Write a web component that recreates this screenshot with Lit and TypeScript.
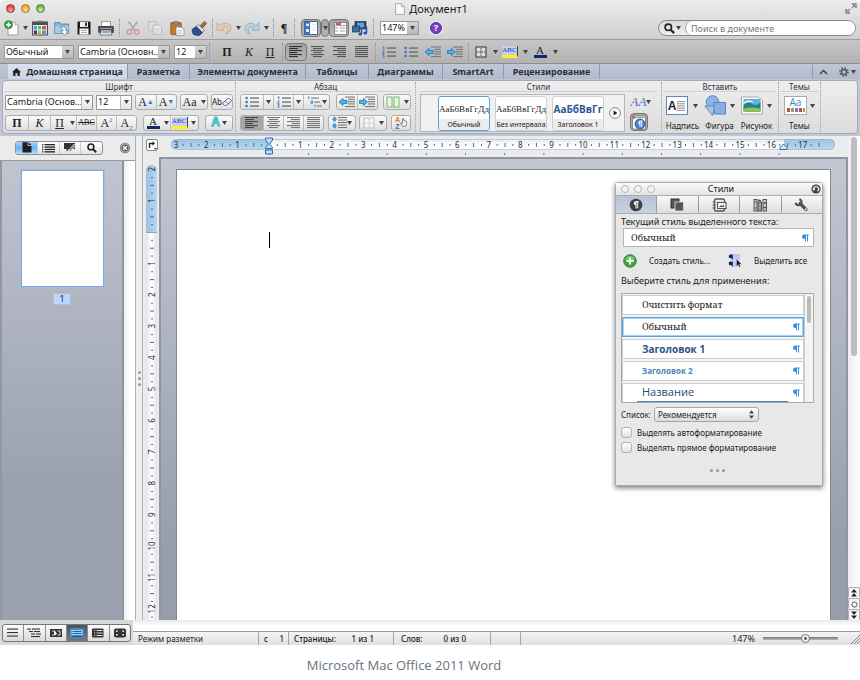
import { LitElement, html, css, svg, nothing } from "lit";
import { customElement } from "lit/decorators.js";
import { classMap } from "lit/directives/class-map.js";

const pic = (w: number, h: number, body: unknown) =>
  html`<svg width=${w} height=${h} viewBox="0 0 ${w} ${h}" aria-hidden="true">${body}</svg>`;

const caret = html`<svg class="caret" width="5" height="4" viewBox="0 0 5 4" aria-hidden="true"><path d="M0 0h5L2.5 4z" fill="#444" /></svg>`;

const lines = (rows: number[][], c = "#555") => svg`${rows.map(([x, y, w]) => svg`<rect x=${x} y=${y} width=${w} height="1.1" fill=${c} />`)}`;

const alignIcon = (kind: string, c = "#555") => {
  const ws = [13, 9, 13, 8, 13, 9];
  return pic(14, 13, lines(ws.map((w, i) => {
    const width = kind === "justify" ? 13 : w;
    const x = kind === "center" ? (13 - width) / 2 : kind === "right" ? 13 - width : 0;
    return [x, 1 + i * 2, width];
  }), c));
};

const bulletIcon = pic(14, 12, svg`
  <circle cx="1.6" cy="2" r="1.3" fill="#3f6fd0"/><circle cx="1.6" cy="6" r="1.3" fill="#3f6fd0"/><circle cx="1.6" cy="10" r="1.3" fill="#3f6fd0"/>
  ${lines([[5, 1.5, 9], [5, 5.5, 9], [5, 9.5, 9]])}`);
const numberIcon = pic(14, 12, svg`
  <path d="M.8 1.2l1-.7v3M.6 5h1.6l-1.6 2.4h1.8M.6 8.7h1.6l-.9 1.2q1.3.3.8 1.2-.5.7-1.6.3" fill="none" stroke="#3f6fd0" stroke-width=".9"/>
  ${lines([[5, 1.5, 9], [5, 5.5, 9], [5, 9.5, 9]])}`);
const multiIcon = pic(15, 12, svg`
  <path d="M.8 1.2l1-.7v3M4 5h1.5v2.4H4zM8 8.6v2.6" fill="none" stroke="#3f8fd0" stroke-width="1"/>
  ${lines([[4, 1.5, 8], [7, 5.5, 6], [10, 9.5, 5]], "#777")}`);
const indentIcon = (dir: number) => pic(16, 12, svg`
  ${lines([[6, .5, 10], [9, 2.8, 7], [9, 5.1, 7], [9, 7.4, 7], [6, 10, 10]], "#777")}
  <path d=${dir < 0 ? "M0 6l4-3.6v2h4v3H4v2z" : "M8.5 6l-4-3.6v2h-4v3h4v2z"} fill="#4fb4ee" stroke="#1e6fae" stroke-width=".8"/>`);
const borderIcon = (c: string) => pic(12, 12, svg`
  <rect x="1" y="1" width="10" height="10" fill="#fff8" stroke=${c}/><path d="M6 2v8M2 6h8" stroke=${c} stroke-dasharray="1.4 1"/>`);
const newIcon = pic(16, 16, svg`
  <path d="M5 2h6l3 3v10H4V6" fill="#fdfdfd" stroke="#8a8a8a" stroke-width=".8"/><path d="M11 2v3h3" fill="#ddd" stroke="#999" stroke-width=".6"/>
  <circle cx="4.500" cy="4.700" r="4" fill="#2fa52f" stroke="#157515" stroke-width=".6"/><path d="M4.500 2.200v5M2 4.700h5" stroke="#fff" stroke-width="1.600"/>`);
const templateIcon = pic(16, 16, svg`
  <rect x=".6" y="2" width="14.8" height="13" fill="#e8edf2" stroke="#444"/><rect x="1" y="2" width="14" height="3" fill="#4a4f55"/><rect x="5.5" y=".8" width="5" height="2" fill="#666"/>
  <rect x="2" y="6" width="3" height="3.5" fill="#4b9fd8"/><rect x="6" y="6" width="3" height="3.5" fill="#3c8"/><rect x="10" y="6" width="4" height="3.5" fill="#d8572c"/>
  <rect x="2" y="10.5" width="3" height="3.5" fill="#345"/><rect x="6" y="10.5" width="3" height="3.5" fill="#e0a52c"/><rect x="10" y="10.5" width="4" height="3.5" fill="#4b9fd8"/>`);
const openIcon = pic(16, 16, svg`
  <path d="M.7 2.5h5l1 1.5h8v9.5H.7z" fill="#86b4d4" stroke="#4d7d9e" stroke-width=".8"/><path d="M1 6h13.5v7.2H1z" fill="#a7cce4"/>
  <path d="M6 7c5-1 6 1 6 4h2.6l-4 4.4-4-4.4H9c0-2-1-3-3-4z" fill="#fff" stroke="#4d7d9e" stroke-width=".8"/>`);
const saveIcon = pic(14, 14, svg`
  <path d="M.5.5h12l1 1v12H.5z" fill="#1b1b20"/><rect x="3" y="1" width="8" height="5" fill="#e9eef4"/><rect x="8" y="1.5" width="2" height="3.5" fill="#333"/>
  <rect x="2.5" y="7.5" width="9" height="6" fill="#fff"/><path d="M4 9.4h6M4 11.4h6" stroke="#8a8fa0" stroke-width=".8"/>`);
const printIcon = pic(16, 15, svg`
  <path d="M3.5.5h9v5h-9z" fill="#fafafa" stroke="#777" stroke-width=".7"/><path d="M.6 5.5h14.8v6H.6z" fill="#4a4a4e" stroke="#222" stroke-width=".6"/>
  <path d="M2 7.4h12" stroke="#bbb" stroke-width=".8"/><path d="M3.2 9h9.6l1.2 5H2z" fill="#e4e8ec" stroke="#555" stroke-width=".7"/><path d="M4 11h8" stroke="#5a9bd0" stroke-width="1.4"/>`);
const cutIcon = pic(14, 14, svg`
  <path d="M2.5.5l6.6 9M11.5.5l-6.6 9" stroke="#a9a9a9" stroke-width="1.5"/><circle cx="3.4" cy="11" r="2.2" fill="none" stroke="#cf9a92" stroke-width="1.4"/><circle cx="10.6" cy="11" r="2.2" fill="none" stroke="#cf9a92" stroke-width="1.4"/>`);
const copyIcon = pic(15, 14, svg`
  <path d="M.7.7h8v9h-8z" fill="#dedede" stroke="#b4b4b4" stroke-width=".8"/><path d="M5 4h6l2.6 2.6v7H5z" fill="#e8e8e8" stroke="#adadad" stroke-width=".8"/><path d="M6.5 8h5M6.5 10h5M6.5 12h5" stroke="#c2c2c2" stroke-width=".7"/>`);
const pasteIcon = pic(15, 15, svg`
  <rect x=".8" y="1.6" width="10.4" height="12" rx="1" fill="#c4792a" stroke="#80470f" stroke-width=".8"/><rect x="3.5" y=".4" width="5" height="2.8" rx="1" fill="#8b8b8b" stroke="#555" stroke-width=".5"/>
  <path d="M6 6h5l3 2.4v6H6z" fill="#fff" stroke="#777" stroke-width=".7"/><path d="M7.4 9.5h4.6M7.4 11h4.6M7.4 12.5h4.6" stroke="#9aa" stroke-width=".6"/>`);
const brushIcon = pic(16, 15, svg`
  <path d="M9 5L13.4.4l2.2 2L11.4 7z" fill="#ad6d34" stroke="#5c3411" stroke-width=".6"/><path d="M5 5.5l2.5-2 6 5.6-2 2.6z" fill="#d9dde2" stroke="#555" stroke-width=".6"/>
  <path d="M1 8.5L5 5.6l6.4 6-3 2.9q-3.5.5-6.4-1.5z" fill="#2b4e94" stroke="#14264e" stroke-width=".6"/>`);
const undoIcon = (flip: boolean, c: string, e: string) => pic(16, 13, svg`
  <path transform=${flip ? "translate(16 0) scale(-1 1)" : "translate(0 0)"} d="M1 .8v7.4h7.4L5.8 5.8c3-2.6 6.8-.6 6 3-.3 1.300-1 2.200-2 3.200 3.200-1 5.400-3 5.200-6C14.500.9 8-.7 3.900 3.800z" fill=${c} stroke=${e} stroke-width=".8"/>`);
const sidebarIcon = pic(14, 14, svg`
  <rect x=".5" y=".5" width="13" height="13" fill="#fff" stroke="#4a6798"/><rect x="1" y="1" width="5" height="12" fill="#3f6fbc"/><rect x="2" y="2.600" width="3" height="2.600" fill="#dfeafa"/><rect x="2" y="8" width="3" height="3" fill="#dfeafa"/><path d="M8 3.500h4M8 6h4M8 8.500h4" stroke="#d6e0ee" stroke-width=".8"/>`);
const toolboxIcon = pic(15, 13, svg`
  <path d="M2.500.5h12v12h-12z" fill="#fbfbfb" stroke="#777" stroke-width=".8"/><path d="M.5 3.500h14M3 6h3M8 6h5M3 9h3M8 9h5" stroke="#9b9b9b" stroke-width=".9"/><path d="M4 2h5" stroke="#d22" stroke-width="1.600"/>`);
const mediaIcon = pic(16, 15, svg`
  <rect x="3" y=".5" width="11" height="7.500" fill="#24405f" stroke="#16202c" stroke-width=".6"/><rect x="5" y="1.600" width="7" height="5" fill="#5aa6dd"/><rect x=".5" y="5" width="7" height="6" fill="#3b6ea8" stroke="#1b3352" stroke-width=".7"/>
  <path d="M9.500 12.800V7.500l5-1v5.300" fill="none" stroke="#2251a5" stroke-width="1.500"/><ellipse cx="8.300" cy="13" rx="1.900" ry="1.500" fill="#2251a5"/><ellipse cx="13.300" cy="12" rx="1.900" ry="1.500" fill="#2251a5"/>`);
const lens = (s: number) => html`<svg width=${s} height=${s} viewBox="0 0 11 11" aria-hidden="true"><circle cx="4.300" cy="4.300" r="3.200" fill="none" stroke="#222" stroke-width="1.700"/><path d="M6.700 6.700l3.400 3.400" stroke="#222" stroke-width="2.200"/></svg>`;
const gearIcon = pic(10, 10, svg`<circle cx="5" cy="5" r="2.600" fill="none" stroke="#555" stroke-width="1.500"/><circle cx="5" cy="5" r="4.100" fill="none" stroke="#555" stroke-width="1.400" stroke-dasharray="1.600 1.620"/>`);
const eraserIcon = pic(10, 8, svg`<path d="M.8 5.200L5.600.7q1-.6 2 0l1.300 1.200q.6.900 0 1.600L4.500 7.300q-1 .5-2 0L.9 6.300z" fill="#f4f6fb" stroke="#3e5b9a" stroke-width=".9"/><path d="M3.200 3l3 2.800" stroke="#3e5b9a" stroke-width=".7"/>`);
const columnsIcon = pic(14, 12, svg`<rect x="1" y="1" width="5" height="10" fill="#e9f7e3" stroke="#77b868"/><rect x="8" y="1" width="5" height="10" fill="#e9f7e3" stroke="#77b868"/>`);
const spacingIcon = pic(15, 13, svg`${lines([[6, 1, 9], [6, 3.500, 9], [6, 6, 9], [6, 8.500, 9], [6, 11, 9]], "#777")}<path d="M2.500.4l2.300 3H3.500v1.800h-2V3.400H.2zM2.500 12.600l2.300-3H3.500V7.800h-2v1.800H.2z" fill="#3fa0e0" stroke="#1e6fae" stroke-width=".4"/>`);
const handIcon = pic(7, 9, svg`<path d="M2.600.6v5L1 4.400.4 5.300 2.800 8.400h2.800l1-2.800V3.400L3.700 2.600v-2z" fill="#fff" stroke="#555" stroke-width=".7"/>`);
const playIcon = pic(12, 12, svg`<circle cx="6" cy="6" r="5.400" fill="#fbfbfb" stroke="#888"/><path d="M4.600 3.500v5L8.400 6z" fill="#222"/>`);
const gaugeIcon = pic(16, 16, svg`<rect x="1.500" y="2" width="13" height="13" fill="#fff" stroke="#777" stroke-width=".8"/><path d="M2 3.600h12" stroke="#999"/><path d="M3 2v3" stroke="#c22"/><circle cx="9" cy="10" r="5" fill="#4b83cc" stroke="#1f4b8d" stroke-width=".8"/><path d="M8.700 7h3M9 7v6M10.700 7v6" stroke="#fff" stroke-width=".9"/><path d="M9 7a1.700 1.700 0 000 3.400z" fill="#fff"/>`);
const textboxIcon = html`<span class="textbox"><b>A</b>${pic(9, 12, lines([[0, 1, 8], [0, 3.200, 8], [0, 5.400, 8], [0, 7.600, 8], [0, 9.800, 8]], "#999"))}</span>`;
const shapeIcon = pic(23, 22, svg`<circle cx="8.500" cy="7" r="6.300" fill="#8fb6e2" stroke="#4e80bd" stroke-width=".9"/><path d="M.8 11l7.600 9.500L11 11z" fill="#a6c6ea" stroke="#4e80bd" stroke-width=".9"/><rect x="10" y="7.500" width="11.500" height="11.500" fill="#86b0e0" stroke="#4e80bd" stroke-width=".9"/>`);
const pictureIcon = pic(22, 19, svg`<path d="M.5 1h17l4 4v13H.5z" fill="#fff" stroke="#999" stroke-width=".8"/><rect x="2.500" y="3" width="17" height="12.500" fill="#5bb3e6"/><path d="M2.500 9q5-4 9-1t8-2v9.500h-17z" fill="#2b7f86"/><path d="M2.500 12.500q6-2 17 0v3h-17z" fill="#8fc64b"/><path d="M3 7q4-3 9-1" stroke="#fff" stroke-width="1.200" fill="none"/>`);
const docSmall = pic(10, 12, svg`<path d="M.6.6h5.800L9.400 3.500v7.900H.6z" fill="#fcfcfc" stroke="#999" stroke-width=".8"/><path d="M6.400.6v3h3" fill="#e5e5e5" stroke="#999" stroke-width=".7"/>`);
const expandIcon = pic(12, 11, svg`<path d="M7 .8h4.200V5zM.8 10.200V6L5 10.200z" fill="#aaa" stroke="#777" stroke-width=".9"/><path d="M9.500 2.500L6.800 5.200M2.500 8.500l2.700-2.700" fill="none" stroke="#888" stroke-width="1.200"/>`);
const pageGlyph = pic(11, 11, svg`<path d="M1.500.3h5v3.700h4v6.600h-9z" fill="#1e1e1e"/><path d="M7.400.3v2.800h3z" fill="#1e1e1e"/>`);
const listGlyph = (w = 13) => pic(w, 10, svg`${[1, 3.400, 5.800, 8.200].map(y => svg`<rect x="0" y=${y} width="1.300" height="1.300" fill="#222"/><rect x="2.500" y=${y} width=${w - 2.500} height="1.300" fill="#222"/>`)}`);
const reviewGlyph = pic(14, 11, svg`<path d="M1 1h11v6H6L3.500 9.500V7H1z" fill="#333"/><path d="M5.500 10L6.300 7.400 11 2l1.800 1.400-5 5.500z" fill="#888" stroke="#f4f4f4" stroke-width=".6"/>`);
const closeGlyph = pic(12, 12, svg`<circle cx="6" cy="6" r="5.200" fill="#666"/><circle cx="6" cy="6" r="4.100" fill="none" stroke="#ddd" stroke-width=".7"/><path d="M4.200 4.200l3.600 3.600M7.800 4.200L4.200 7.800" stroke="#fff" stroke-width="1.300"/>`);
const pilcrow = html`<svg class="pil" width="8" height="8" viewBox="0 0 8 8" aria-hidden="true"><path d="M3.200.4h4.600v1H7v6.200H6V1.400H5v6.200H4V4.900H3.200A2.250 2.250 0 013.200.4z" fill="#3f8fe6"/></svg>`;
const plusIcon = pic(14, 14, svg`<circle cx="7" cy="7" r="6.300" fill="#3fa53f" stroke="#1f7a22" stroke-width=".8"/><path d="M2 5.500a5.300 5.300 0 0110 0q-5 1.500-10 0z" fill="#8fd28a" opacity=".7"/><path d="M7 3.400v7.200M3.400 7h7.200" stroke="#fff" stroke-width="1.900"/>`);
const selectAllIcon = pic(14, 14, svg`<rect x="4" y="0" width="8" height="6" fill="#b9c9fb"/><rect x="4" y="7" width="6" height="6" fill="#b9c9fb"/><path d="M.8 2A1.500 1.500 0 012.300.5H4.800v5H3.500V3.800A1.700 1.700 0 01.8 2zM.8 9A1.500 1.500 0 012.300 7.500H4.800v5H3.500v-1.700A1.700 1.700 0 01.8 9z" fill="#16235e"/><path d="M8.500 5v7.200l1.700-1.500 1.200 2.600 1.200-.6-1.200-2.500h2.200z" fill="#111" stroke="#fff" stroke-width=".3"/>`);
const pTab = [
  pic(14, 14, svg`<circle cx="7" cy="7" r="6.300" fill="#3c3f45"/><path d="M6.500 3.600h3.200M7 3.600v6.800M8.700 3.600v6.800" stroke="#fff" stroke-width="1"/><path d="M6.800 3.300a2 2 0 000 4z" fill="#fff"/>`),
  pic(15, 14, svg`<rect x="1" y="1" width="8" height="9" fill="#555" stroke="#333"/><rect x="5" y="4" width="8.500" height="9" fill="#555" stroke="#e4e4e4" stroke-width=".8"/>`),
  pic(15, 14, svg`<rect x="2.500" y="1" width="10" height="12" rx="1.500" fill="#eee" stroke="#555" stroke-width="1.400"/><path d="M.5 4h3M.5 7h3M.5 10h3" stroke="#555" stroke-width="1.100"/><rect x="5.500" y="4.500" width="8.500" height="6" fill="#fff" stroke="#555" stroke-width="1.200"/><path d="M7 9l2-2 1.500 1L12 6.500V9z" fill="#555"/>`),
  pic(15, 14, svg`<rect x="1" y="1.500" width="3" height="11.500" fill="#ccc" stroke="#555"/><path d="M1.500 4h2M1.500 10h2" stroke="#555"/><rect x="5" y="4" width="3.500" height="9" fill="#999" stroke="#555"/><path d="M5 2l3 1" stroke="#555" stroke-width="1.400"/><rect x="10" y="1.500" width="3.500" height="11.500" fill="#ccc" stroke="#555"/><path d="M10 5h3.500M10 9.500h3.500" stroke="#555" stroke-width="1.400"/>`),
  pic(15, 14, svg`<path d="M6 5.500l6 5.800" stroke="#4f4f4f" stroke-width="3.200" stroke-linecap="round"/><path d="M5.300 1.300A3 3 0 111.600 4.800" fill="none" stroke="#4f4f4f" stroke-width="2"/><circle cx="11.800" cy="11.200" r=".9" fill="#eee"/>`),
];
const lockGlyph = pic(10, 10, svg`<circle cx="5" cy="5" r="4.600" fill="#444"/><path d="M2.800 6.500A2.600 2.600 0 116.500 7.200" fill="none" stroke="#eee" stroke-width="1.200"/><path d="M2 4l2.600.4L3 6.600z" fill="#eee"/>`);
const views = [
  pic(14, 12, lines([[1, 1.500, 11], [1, 5, 11], [1, 8.500, 11]], "#333")),
  pic(14, 12, lines([[0, 1.500, 4], [5, 1.500, 8], [2, 4, 4], [7, 4, 6], [4, 6.500, 4], [9, 6.500, 5], [4, 9, 9]], "#333")),
  pic(14, 12, svg`<rect x="1" y="2" width="12" height="8" fill="#333"/><path d="M3 4h2.500v4H3M8.500 4H11v4H8.500" stroke="#ddd" fill="none"/><path d="M5.500 3v5.500L8 7z" fill="#fff"/>`),
  pic(14, 12, svg`<rect x="0" y="1" width="14" height="10" rx="1" fill="#3f8ccc"/><rect x="1.500" y="3" width="11" height="5" fill="#9cd2fb"/><path d="M2.500 4.500h9M2.500 6.500h9M2 9.500h10" stroke="#24537f" stroke-width=".9"/>`),
  pic(14, 12, svg`<rect x="1" y="1.500" width="11.500" height="9" rx="1" fill="#333"/><path d="M3 3.500h1.200M5.500 3.500h6M3 6h1.200M5.500 6h6M3 8.500h1.200M5.500 8.500h6" stroke="#eee" stroke-width=".9"/>`),
  pic(14, 12, svg`<rect x="1" y="1.500" width="12" height="9" rx="2" fill="#333"/><path d="M3.500 5V4H5M9 4h1.500v1M3.500 7v1H5M9 8h1.500V7" stroke="#fff" fill="none"/>`),
];

const STEP = 31.4;
const hMarks = Array.from({ length: 21 }, (_, i) => i - 3);
const hRuler = html`<svg class="hruler" width="664" height="20" viewBox="0 0 664 20" aria-hidden="true">
  <defs>
    <linearGradient id="blue" x2="0" y2="1"><stop offset="0" stop-color="#9cc3e4"/><stop offset=".5" stop-color="#a9cdea"/><stop offset="1" stop-color="#bcdaf2"/></linearGradient>
    <linearGradient id="pale" x2="0" y2="1"><stop offset="0" stop-color="#e4e8ee"/><stop offset=".6" stop-color="#fff"/></linearGradient>
  </defs>
  <rect x="0" y="3" width="664" height="11" rx="5" fill="url(#blue)"/><rect x="98" y="3" width="515" height="11" fill="url(#pale)"/>
  <rect x=".5" y="3.500" width="663" height="10" rx="5" fill="none" stroke="#9ab4cc" stroke-opacity=".6"/>
  ${hMarks.filter(n => n < 18).map(n => {
    const x = 98 + n * STEP;
    const t = [.25, .5, .75].map(f => ({ x: x + f * STEP, h: f === .5 ? 4 : 2 })).filter(q => q.x < 655);
    return svg`${n !== 0 ? svg`<text class="num" x=${x < 8 ? 5 : x} y="12" text-anchor="middle">${Math.abs(n)}</text>` : nothing}
      ${t.map(q => svg`<rect x=${q.x} y=${9 - q.h / 2} width="1" height=${q.h} fill="#667"/>`)}`;
  })}
  ${Array.from({ length: 14 }, (_, i) => svg`<rect x=${98 + i * 39.2} y="17" width="1" height="2" fill="#778"/>`)}
  <path d="M94.500 2h7v2L98.500 8l3 3.500v1h-7v-1l3-3.500-3-4zM94.500 14h7v4h-7z" fill="#bfe0fb" stroke="#2a6cb0"/>
  <path d="M612.500 8l3.500 3.500v2h-7v-2z" fill="#cfe8fc" stroke="#2a6cb0"/>
</svg>`;
const vCount = Math.max(1, Math.floor((window.innerHeight - 299) / STEP)) + 3;
const vRuler = html`<svg class="vruler" width="11" height="1500" viewBox="0 0 11 1500" aria-hidden="true">
  <defs>
    <linearGradient id="vb"><stop offset="0" stop-color="#9cc3e4"/><stop offset="1" stop-color="#b5d6f0"/></linearGradient>
    <linearGradient id="vp"><stop offset="0" stop-color="#e0e4ea"/><stop offset=".5" stop-color="#fff"/><stop offset="1" stop-color="#dfe3ea"/></linearGradient>
  </defs>
  <rect x="0" y="0" width="11" height="1500" rx="5" fill="url(#vb)"/><rect x="0" y="67" width="11" height="1440" fill="url(#vp)"/><path d="M0 67.500h11" stroke="#8aa"/>
  ${Array.from({ length: vCount }, (_, i) => i - 2).map(n => {
    const y = 67 + n * STEP;
    return svg`${n !== 0 ? svg`<text class="num" transform="translate(9 ${y}) rotate(-90)" text-anchor="middle">${Math.abs(n)}</text>` : nothing}
      ${[.25, .5, .75].map(f => svg`<rect x=${f === .5 ? 4 : 5} y=${y + f * STEP} width=${f === .5 ? 4 : 2} height="1" fill="#667"/>`)}`;
  })}
</svg>`;

const sep = html`<i class="sep"></i>`;
const gap = html`<span class="gap"></span>`;
const combo = (label: string, value: string, cls: string) => html`<span class="combo ${cls}"><select aria-label=${label}><option>${value}</option></select><span class="arrow">${caret}</span></span>`;
const btn = (label: string, body: unknown, cls = "") => html`<button class="ib ${cls}" aria-label=${label}>${body}</button>`;
const colorA = html`<span class="colorA">A</span>`;
const marker = html`<span class="marker">ABC</span>`;

@customElement("app-root")
export class AppRoot extends LitElement {
  static styles = css`
    :host { display: flex; flex-direction: column; min-height: 100vh; background: #fff; color: #1a1a1a; font: 9px/12px "Noto Sans", "Open Sans", sans-serif; }
    * { box-sizing: border-box; }
    svg { display: block; flex: none; }
    button, select, input { font: inherit; color: inherit; margin: 0; padding: 0; border: 0; background: none; border-radius: 0; }
    .app { flex: 1; display: flex; flex-direction: column; min-height: 0; overflow: hidden; border-radius: 5px 5px 0 0; }
    .row { display: flex; align-items: center; }
    .head { background: linear-gradient(#ebebeb, #d0d0d0); border-bottom: 1px solid #9c9c9c; }
    .title { height: 17px; display: grid; grid-template-columns: 1fr auto 1fr; align-items: center; padding: 0 3px 0 6px; font-size: 11px; line-height: 16px; }
    .lights { display: flex; gap: 6px; }
    .lights i { width: 9px; height: 9px; border-radius: 50%; border: 1px solid #8d3a36; background: radial-gradient(circle at 50% 75%, #ffb0a4, #e8473f 60%); }
    .lights i + i { border-color: #a07226; background: radial-gradient(circle at 50% 75%, #ffe7a0, #efa83a 60%); }
    .lights i + i + i { border-color: #4e7d38; background: radial-gradient(circle at 50% 75%, #d7f5b4, #74bb52 60%); }
    .doc { display: flex; align-items: center; gap: 4px; }
    .right { justify-self: end; }
    .tools { height: 22px; padding: 0 4px 0 3px; }
    .ib { width: 22px; height: 18px; display: flex; align-items: center; justify-content: center; flex: none; }
    .w18 { width: 18px; } .w10 { width: 10px; } .w16 { width: 16px; } .w8 { width: 8px; } .w26 { width: 26px; }
    .w20 { width: 20px; }
    .sep { flex: none; width: 1px; height: 18px; margin: 0 2px; border-left: 1px dotted #8d8d8d; align-self: center; }
    .on { background: linear-gradient(#a3a3a3, #b5b5b5); border: 1px solid #757575; border-radius: 4px; }
    .combo { display: grid; height: 14px; flex: none; background: #fff; border: 1px solid #9a9a9a; }
    .combo select { grid-area: 1 / 1; appearance: none; width: 100%; height: 12px; padding-left: 1px; line-height: 12px; outline: 0; white-space: nowrap; }
    .arrow { grid-area: 1 / 1; justify-self: end; width: 11px; display: flex; align-items: center; justify-content: center; pointer-events: none; background: linear-gradient(#d4d4d4, #b8b8b8); }
    .c70 { width: 70px; } .c92 { width: 92px; } .c33 { width: 33px; } .c39 { width: 39px; } .c88 { width: 88px; } .c36 { width: 36px; }
    .gap { width: 4px; flex: none; }
    .help { width: 12px; height: 12px; border-radius: 50%; background: #7d3fc0; border: 1px solid #5a2798; box-shadow: 0 0 0 1px #eee; color: #fff; font-weight: 700; line-height: 10px; text-align: center; }
    .search { margin-left: auto; width: 198px; height: 16px; border: 1px solid #8a8a8a; border-radius: 8px; background: linear-gradient(#d9d9d9, #f0f0f0); display: flex; align-items: center; padding-left: 5px; gap: 1px; }
    .search input { flex: 1; min-width: 0; height: 14px; margin-left: 3px; padding-left: 5px; background: #fff; border-radius: 7px; border-left: 1px solid #999; font-size: 9px; outline: 0; }
    .search input::placeholder { color: #777; }
    .fmt { height: 24px; padding-left: 4px; background: linear-gradient(#c6c6c6, #b2b2b2); border-bottom: 1px solid #8e8e8e; }
    .serif { font: 12px/14px "Liberation Serif", serif; color: #222; }
    .it { font-style: italic; } .un { text-decoration: underline; } .st { text-decoration: line-through; }
    .bold { font-weight: 700; }
    .tiny { font-size: 8px; }
    .colorA { font: 11px/10px "Liberation Serif", serif; width: 13px; text-align: center; border-bottom: 3px solid #17256b; }
    .marker { font: 7px/9px "Liberation Serif", serif; color: #2a3f94; width: 16px; text-align: center; background: #c4ceee; border-bottom: 3px solid #fdf12a; border-right: 1px solid #444; }
    .tabs { height: 15px; padding-left: 8px; background: linear-gradient(#c0c7d6, #b1b9cb); }
    .tab { height: 15px; border-right: 1px solid #8f98ad; font-weight: 700; font-size: 9px; color: #2b2f38; display: flex; align-items: center; justify-content: center; gap: 5px; white-space: nowrap; }
    .tab.cur { background: linear-gradient(#d9e0ef, #cdd5e6); }
    .t120 { width: 120px; } .t62 { width: 62px; } .t116 { width: 116px; } .t63 { width: 63px; } .t74 { width: 74px; } .t61 { width: 61px; } .t96 { width: 96px; }
    .tabend { margin-left: auto; gap: 11px; padding: 0 4px 0 6px; height: 13px; border-left: 1px solid #929aad; }
    .tabend .row { gap: 2px; }
    .ribbonwrap { background: #bfc6d5; padding: 1px 2px 2px; }
    .ribbon { height: 54px; border: 1px solid #a4abba; border-radius: 4px; background: linear-gradient(#eeeeee, #dcdcdc); display: flex; overflow: hidden; }
    .rg { display: flex; flex-direction: column; padding: 0 2px; flex: none; }
    .g1 { width: 232px; } .g2 { width: 179px; padding: 0 4px; } .g3 { width: 245px; padding: 0 4px; } .g4 { width: 116px; } .g5 { width: 41px; }
    .rt { height: 11px; font-size: 8px; line-height: 11px; text-align: center; border-bottom: 1px solid #d0d0d0; color: #333; }
    .rr { display: flex; justify-content: space-between; height: 21px; align-items: center; }
    .ribbon > .sep { height: 50px; margin: 0; border-color: #9f9f9f; }
    .grp { display: flex; height: 16px; border: 1px solid #adadad; border-radius: 3px; background: linear-gradient(#fafafa, #dfdfdf); overflow: hidden; }
    .grp .ib { height: 14px; }
    .grp .line { border-left: 1px solid #bcbcbc; }
    .grp .dark { background: #a6a6a6; }
    .rr .combo { height: 15px; } .rr .combo select { height: 13px; } .rr .arrow { background: linear-gradient(#fff, #e4e4e4); border-left: 1px solid #bbb; }
    .blueup { color: #2d82d2; font-size: 7px; line-height: 8px; align-self: center; }
    sup, sub { font-size: 7px; line-height: 0; color: #2d82d2; }
    .glow { color: #fff; font: 700 12px/13px "Liberation Sans", sans-serif; -webkit-text-stroke: 1px #2bb5c6; margin-right: 2px; }
    .caretgap { gap: 4px; }
    .sortaz { display: flex; flex-direction: column; font: 700 7px/7px "Liberation Sans", sans-serif; color: #d07a18; }
    .sortaz b + b { color: #2e6fb7; }
    .gallery { display: flex; align-items: center; border: 1px solid #b5b5b5; background: #f1f1f1; height: 38px; padding: 0 3px 0 17px; gap: 5px; margin-top: 2px; width: 205px; }
    .card { width: 52px; height: 35px; border: 1px solid #cfcfcf; border-radius: 3px; background: #fff; display: flex; flex-direction: column; overflow: hidden; padding: 0; text-align: center; flex: none; }
    .card.sel { border-color: #5aa2da; }
    .card .sample { height: 23px; white-space: nowrap; overflow: hidden; width: 100%; }
    .card .s { font: 9px/24px "Liberation Serif", serif; }
    .card .h { font: 700 10px/24px "Open Sans", sans-serif; color: #2c5590; }
    .card .lab { background: #ececec; width: 100%; font-size: 7px; line-height: 11px; white-space: nowrap; height: 11px; }
    .stylecol { display: flex; flex-direction: column; gap: 2px; padding: 1px 0 0 5px; width: 30px; }
    .stylebody { display: flex; }
    .aa { font: italic 13px/14px "Liberation Serif", serif; color: #8e5bb5; } .aa b { color: #3d7fca; font-weight: 400; }
    .big { display: grid; grid-template-columns: auto auto; align-items: center; justify-content: center; column-gap: 3px; row-gap: 0; width: 37px; height: 41px; flex: none; grid-template-rows: 27px 12px; }
    .big em { grid-column: 1 / 3; font-style: normal; font-size: 8px; line-height: 11px; text-align: center; color: #222; }
    .textbox { width: 22px; height: 19px; border: 1px solid #5c86c8; background: #fff; display: flex; align-items: center; gap: 1px; padding-left: 1px; font: 12px/14px "Liberation Sans", sans-serif; }
    .theme { width: 23px; height: 19px; border: 1px solid #aaa; background: #fff; display: flex; flex-direction: column; align-items: center; font: 10px/11px "Open Sans", sans-serif; color: #3c86c6; }
    .theme i { width: 18px; height: 4px; background: repeating-linear-gradient(90deg, #c5484b 0 3px, #fff 3px 4px, #7cae4a 4px 7px, #fff 7px 8px, #8b6bc0 8px 11px, #fff 11px 12px); }

    .main { flex: 1; display: flex; min-height: 0; position: relative; background: #ebebeb; }
    .side { width: 135px; display: flex; flex-direction: column; flex: none; }
    .sidehead { height: 24px; display: flex; align-items: center; justify-content: space-between; padding: 0 4px 1px 15px; }
    .seg { display: flex; width: 88px; height: 14px; border: 1px solid #909090; border-radius: 3px; background: linear-gradient(#fff, #e3e3e3); overflow: hidden; }
    .seg button { flex: 1; display: flex; align-items: center; justify-content: center; }
    .seg button + button { border-left: 1px solid #ccc; }
    .seg .cur { background: linear-gradient(#a6d0f7, #6cb2f2 50%, #b0e2fd); }
    .panes { flex: 1; display: flex; border-top: 1px solid #999; }
    .thumbs { width: 124px; background: linear-gradient(#c0c5d0, #9ba1ae 70%); border-left: 2px solid #9098a6; border-right: 2px solid #8e94a2; display: flex; flex-direction: column; align-items: center; padding-top: 9px; gap: 6px; }
    .thumb { width: 83px; height: 117px; background: #fff; border: 1px solid #7ca8de; box-shadow: 0 0 0 1px #a9bdd8; }
    .pn { background: #b9d6ff; border: 1px solid #b8bfc9; width: 18px; height: 12px; line-height: 10px; text-align: center; color: #124; }
    .track { flex: 1; background: linear-gradient(90deg, #eee, #fff 50%); }
    .split { width: 8px; flex: none; border-left: 1px solid #b0b0b0; border-right: 1px solid #b5b5b5; background: #efefef; display: flex; flex-direction: column; align-items: center; justify-content: center; gap: 3px; }
    .split i, .grip i { width: 3px; height: 3px; border-radius: 50%; background: #999; }
    .work { flex: 1; min-width: 0; display: flex; flex-direction: column; }
    .rulerrow { height: 21px; display: flex; align-items: flex-start; padding-left: 3px; gap: 13px; overflow: hidden; }
    .tabstop { width: 12px; height: 12px; margin-top: 3px; border: 1px solid #888; border-radius: 2px; background: #fff; display: flex; align-items: center; justify-content: center; }
    .num { font: 8px "Noto Sans", sans-serif; fill: #2b2b2b; }
    .canvas { flex: 1; display: flex; min-height: 0; }
    .vcol { width: 16px; padding-left: 3px; flex: none; overflow: hidden; height: 0; min-height: 100%; padding-top: 8px; }
    .desk { flex: 1; background: linear-gradient(#c2c7d2, #979dab 85%); border: 2px solid #8f95a2; border-bottom: 0; padding: 10px 15px 0; display: flex; }
    .paper { flex: 1; background: #fff; border: 1px solid #7f8694; border-bottom: 0; padding: 62px 0 0 92px; outline: 0; }
    .cursor { width: 1px; height: 16px; background: #000; }
    .vs { width: 12px; flex: none; background: linear-gradient(90deg, #eee, #fff); display: flex; flex-direction: column; align-items: center; justify-content: space-between; margin-top: -21px; }
    .vs > i { width: 6px; height: 219px; border-radius: 3px; background: #bdbdbd; margin-top: 1px; }
    .jump { display: flex; flex-direction: column; width: 12px; }
    .jump button { height: 11px; border: 1px solid #aaa; border-bottom: 0; background: #f8f8f8; display: flex; align-items: center; justify-content: center; border-radius: 2px; }

    .panel { position: absolute; top: 46px; right: 37px; width: 208px; background: #e8e8e8; border: 1px solid #aaa; border-radius: 3px 3px 0 0; box-shadow: 0 2px 5px #0008; height: 304px; }
    .ptitle { height: 12px; display: grid; grid-template-columns: 1fr auto 1fr; align-items: center; padding: 0 1px 0 5px; background: linear-gradient(#fafafa, #e4e4e4); font-size: 9px; line-height: 12px; }
    .ptitle .dots { display: flex; gap: 5px; } .ptitle .dots i { width: 8px; height: 8px; border-radius: 50%; border: 1px solid #b5b5b5; background: #f3f3f3; }
    .ptabs { display: flex; height: 19px; border: 1px solid #adadad; border-width: 1px 0; background: linear-gradient(#f8f8f8, #dedede); }
    .ptabs button { flex: 1; display: flex; align-items: center; justify-content: center; }
    .ptabs button + button { border-left: 1px solid #9c9c9c; }
    .ptabs .cur { background: linear-gradient(#b9c2d6, #c9d1e2); }
    .pbody { padding: 1px 8px 0 5px; display: flex; flex-direction: column; align-items: stretch; }
    .pbody p { margin: 0; line-height: 13px; white-space: nowrap; }
    .cur-style { margin-left: 2px; height: 19px; border: 1px solid #b5b5b5; background: #fff; display: flex; align-items: center; justify-content: space-between; padding: 0 4px 0 7px; }
    .cambria { font: 9px/12px "Noto Serif", "DejaVu Serif", "Liberation Serif", serif; }
    .acts { display: flex; height: 26px; align-items: center; margin-top: 1px; padding-left: 2px; font-size: 8px; }
    .acts button { display: flex; align-items: center; gap: 12px; text-align: left; white-space: nowrap; }
    .acts button:first-child { width: 105px; }
    .list { margin: 6px 0 0; border: 1px solid #aaa; background: #f4f4f4; height: 110px; overflow: hidden; display: flex; width: 193px; }
    .list ul { list-style: none; margin: 0; padding: 1px 0; width: 183px; display: flex; flex-direction: column; gap: 2px; flex: none; border-right: 1px solid #ccc; }
    .list li { height: 20px; flex: none; border: 1px solid #ccc; background: #fff; display: flex; align-items: center; justify-content: space-between; padding: 0 3px 0 19px; }
    .list li.sel { border: 1px solid #5aa2da; box-shadow: inset 0 0 0 1px #a9d2f2; }
    .list .bar { width: 5px; height: 27px; border-radius: 3px; background: #bbb; margin: 2px 2px; }
    .h1 { font: 700 10px/16px "Open Sans", sans-serif; color: #2c5088; }
    .h2 { font: 700 8px/14px "Open Sans", sans-serif; color: #4f81bd; }
    .ti { font: 11px/16px "Open Sans", sans-serif; color: #2a4a78; align-self: stretch; flex: 1; margin-left: -5px; padding-left: 5px; margin-right: 4px; border-bottom: 1px solid #4f81bd; }
    .filter { display: flex; align-items: center; gap: 3px; margin-top: 4px; height: 15px; font-size: 8px; }
    .filter .pop { display: grid; width: 105px; height: 15px; border: 1px solid #a5a5a5; border-radius: 3px; background: linear-gradient(#fff, #dcdcdc); }
    .pop select { grid-area: 1 / 1; appearance: none; padding-left: 3px; font-size: 8px; outline: 0; }
    .pop svg { grid-area: 1 / 1; justify-self: end; align-self: center; margin-right: 4px; pointer-events: none; }
    .chk { display: flex; align-items: center; gap: 5px; height: 15px; font-size: 8px; white-space: nowrap; }
    .chk input { appearance: none; width: 11px; height: 11px; border: 1px solid #b2b2b2; border-radius: 3px; background: linear-gradient(#fff, #dfdfdf); }
    .checks { margin-top: 3px; }
    .grip { display: flex; justify-content: center; gap: 3px; margin-top: 14px; }

    .bottom { display: flex; height: 25px; flex: none; }
    .views { width: 133px; background: #d9d9d9; padding: 4px 2px 3px; flex: none; }
    .views div { display: flex; height: 18px; border: 1px solid #777; border-radius: 3px; background: linear-gradient(#fcfcfc, #dadada); overflow: hidden; }
    .views button { flex: 1; display: flex; align-items: center; justify-content: center; }
    .views button + button { border-left: 1px solid #8d8d8d; }
    .views .cur { background: linear-gradient(#4d5055, #77797d); }
    .statcol { flex: 1; display: flex; flex-direction: column; }
    .hs { height: 11px; background: linear-gradient(#e9e9e9, #fff 50%); }
    .status { height: 14px; border-top: 1px solid #9b9b9b; background: linear-gradient(#f4f4f4, #dfe0e3); display: flex; align-items: center; font-size: 8px; line-height: 13px; }
    .status > span { border-right: 1px solid #a5a5a5; height: 13px; padding: 0 4px 0 5px; display: flex; justify-content: space-between; white-space: nowrap; flex: none; }
    .status b { font-weight: 500; }
    .s1 { width: 126px; } .s2 { width: 30px; } .status > .s3 { width: 105px; padding-right: 19px; } .status > .s4 { width: 97px; padding: 0 24px 0 7px; } .s5 { width: 30px; }
    .zoom { margin-left: auto; display: flex; align-items: center; gap: 8px; font-size: 9px; }
    .zoom input { appearance: none; width: 75px; height: 10px; background: linear-gradient(#777, #b8b8b8) center / 100% 3px no-repeat; }
    .zoom input::-webkit-slider-thumb { appearance: none; width: 9px; height: 9px; border: 1px solid #777; border-radius: 50%; background: radial-gradient(#666 0 1px, #f2f2f2 2px); }
    .zoom svg { margin-left: 4px; }
    footer { height: 35px; padding: 8px 52px 0 0; text-align: center; font: 13px/24px "Open Sans", sans-serif; font-weight: 500; color: #667280; }
  `;

  render() {
    return html`<div class="app">
      <header class="head">
        <div class="title"><span class="lights"><i></i><i></i><i></i></span><span class="doc">${docSmall}Документ1</span><span class="right">${expandIcon}</span></div>
        <div class="tools row">
          ${btn("Создать", newIcon, "w18")}${btn("Варианты создания", caret, "w8")}${btn("Шаблоны", templateIcon)}${btn("Открыть", openIcon)}${btn("Сохранить", saveIcon)}${btn("Печать", printIcon)}${sep}
          ${btn("Вырезать", cutIcon)}${btn("Копировать", copyIcon)}${btn("Вставить", pasteIcon)}${btn("Формат по образцу", brushIcon)}${sep}
          ${btn("Отменить", undoIcon(false, "#e3cfae", "#c0a684"), "w18")}${btn("Список отмены", caret, "w10")}${btn("Повторить", undoIcon(true, "#b9d3e4", "#88a9c0"), "w18")}${btn("Список повтора", caret, "w10")}${sep}
          ${btn("Непечатаемые знаки", html`<b>¶</b>`, "w16 serif")}${sep}
          ${gap}${btn("Боковая панель", sidebarIcon, "w20 on")}${btn("Варианты панели", caret, "w8 on")}${btn("Панель элементов", toolboxIcon, "w20 on")}${btn("Обозреватель мультимедиа", mediaIcon)}${sep}${gap}
          ${combo("Масштаб", "147%", "c39")}${gap}${btn("Справка", html`<span class="help">?</span>`, "w26")}
          <label class="search">${lens(11)}${caret}<input type="search" aria-label="Поиск" placeholder="Поиск в документе" /></label>
        </div>
      </header>
      <div class="fmt row">
        ${combo("Стиль", "Обычный", "c70")}${gap}${combo("Шрифт", "Cambria (Основн…", "c92")}${gap}${combo("Размер", "12", "c33")}${sep}${gap}
        ${btn("Полужирный", "П", "serif bold")}${btn("Курсив", "К", "serif it")}${btn("Подчёркнутый", "П", "serif un w20")}${sep}
        ${btn("По левому краю", alignIcon("left", "#333"), "on")}${btn("По центру", alignIcon("center"))}${btn("По правому краю", alignIcon("right"))}${btn("По ширине", alignIcon("justify"))}${sep}
        ${btn("Нумерация", numberIcon)}${btn("Маркеры", bulletIcon)}${btn("Уменьшить отступ", indentIcon(-1))}${btn("Увеличить отступ", indentIcon(1))}${sep}
        ${btn("Границы", borderIcon("#333"), "w20")}${btn("Виды границ", caret, "w8")}${btn("Выделение цветом", marker)}${btn("Цвет выделения", caret, "w8")}${btn("Цвет текста", colorA)}${btn("Выбор цвета", caret, "w8")}
      </div>
      <nav class="tabs row">
        ${[["Домашняя страница", "t120 cur"], ["Разметка", "t62"], ["Элементы документа", "t116"], ["Таблицы", "t63"], ["Диаграммы", "t74"], ["SmartArt", "t61"], ["Рецензирование", "t96"]].map(([t, c], i) =>
          html`<button class="tab ${c}">${i === 0 ? pic(9, 8, svg`<path d="M4.500 0L9 4.300H7.800V8H5.500V5.300h-2V8H1.200V4.300H0z" fill="#222"/>`) : nothing}${t}</button>`)}
        <span class="tabend row">${pic(9, 6, svg`<path d="M1 5l3.500-3.500L8 5" fill="none" stroke="#444" stroke-width="1.500"/>`)}<span class="row">${gearIcon}${caret}</span></span>
      </nav>
      ${this.ribbon()}
      <div class="main">
        <aside class="side">
          <div class="sidehead"><div class="seg">${[pageGlyph, listGlyph(), reviewGlyph, lens(10)].map((g, i) => html`<button class=${classMap({ cur: i === 0 })} aria-label=${["Эскизы", "Схема", "Рецензии", "Поиск"][i]}>${g}</button>`)}</div><button aria-label="Закрыть">${closeGlyph}</button></div>
          <div class="panes"><div class="thumbs"><div class="thumb"></div><span class="pn">1</span></div><div class="track"></div></div>
        </aside>
        <div class="split"><i></i><i></i><i></i></div>
        <section class="work">
          <div class="rulerrow"><button class="tabstop" aria-label="Табуляция">${pic(9, 9, svg`<path d="M1.500 7V2.500H5" fill="none" stroke="#222" stroke-width="1.300"/><path d="M4.500.3L7 2.500 4.500 4.700zM6 7h3L7.500 8.800z" fill="#222"/>`)}</button>${hRuler}</div>
          <div class="canvas"><div class="vcol">${vRuler}</div><div class="desk"><div class="paper"><div class="cursor"></div></div></div>
            <div class="vs"><i></i><div class="jump">
              <button aria-label="Предыдущая страница">${pic(6, 8, svg`<path d="M3 0l3 3.500H0zM3 4l3 3.500H0z" fill="#222"/>`)}</button><button aria-label="Объект перехода">${pic(7, 7, svg`<circle cx="3.500" cy="3.500" r="2.600" fill="none" stroke="#555"/>`)}</button><button aria-label="Следующая страница">${pic(6, 8, svg`<path d="M3 4L0 .5h6zM3 8L0 4.500h6z" fill="#222"/>`)}</button>
            </div></div>
          </div>
        </section>
        ${this.panel()}
      </div>
      <div class="bottom">
        <div class="views"><div>${views.map((v, i) => html`<button class=${classMap({ cur: i === 3 })} aria-label=${["Черновик", "Структура", "Публикация", "Разметка", "Записная книжка", "Во весь экран"][i]}>${v}</button>`)}</div></div>
        <div class="statcol"><div class="hs"></div>
          <div class="status"><span class="s1">Режим разметки</span><span class="s2"><b>с</b><b>1</b></span><span class="s3"><b>Страницы:</b><b>1 из 1</b></span><span class="s4"><b>Слов:</b><b>0 из 0</b></span><span class="s5"></span>
            <label class="zoom">147%<input type="range" aria-label="Масштаб" min="0" max="100" value="57" />${pic(10, 10, svg`<path d="M1 10l9-9M4 10l6-6M7 10l3-3" stroke="#777" stroke-width=".9"/>`)}</label></div>
        </div>
      </div>
    </div>
    <footer>Microsoft Mac Office 2011 Word</footer>`;
  }

  ribbon() {
    const card = (cls: string, text: string, label: string, sel = false) => html`<button class="card ${sel ? "sel" : ""}"><span class="sample ${cls}">${text}</span><span class="lab">${label}</span></button>`;
    const big = (icon: unknown, label: string) => html`<button class="big">${icon}${caret}<em>${label}</em></button>`;
    return html`<div class="ribbonwrap"><div class="ribbon">
      <div class="rg g1"><div class="rt">Шрифт</div>
        <div class="rr">${combo("Шрифт", "Cambria (Основ…", "c88")}${combo("Размер", "12", "c36")}
          <div class="grp">${btn("Увеличить шрифт", html`A<span class="blueup">▲</span>`, "serif w20")}${btn("Уменьшить шрифт", html`A<span class="blueup">▼</span>`, "serif w20 line")}</div>
          <div class="grp">${btn("Регистр", html`Aa${caret}`, "serif caretgap w26")}</div>
          <div class="grp">${btn("Очистить формат", html`<span class="tiny">Ab</span>${eraserIcon}`, "w20")}</div></div>
        <div class="rr">
          <div class="grp">${btn("Полужирный", "П", "serif bold")}${btn("Курсив", "К", "serif it line")}${btn("Подчёркнутый", "П", "serif un line w18")}${btn("Вид черты", caret, "w8")}${btn("Зачёркнутый", html`<span class="tiny st">ABC</span>`, "serif line w20")}${btn("Надстрочный", html`<span>A<sup>2</sup></span>`, "serif line w20")}${btn("Подстрочный", html`<span>A<sub>2</sub></span>`, "serif line w20")}</div>
          <div class="grp">${btn("Цвет текста", colorA, "w18")}${btn("Выбор цвета", caret, "w8")}${btn("Выделение", marker, "w18 line")}${btn("Цвет выделения", caret, "w10")}</div>
          <div class="grp">${btn("Эффекты", html`<span class="glow">A</span>${caret}`, "w26")}</div></div>
      </div>${sep}
      <div class="rg g2"><div class="rt">Абзац</div>
        <div class="rr"><div class="grp">${btn("Маркеры", bulletIcon)}${btn("Вид маркеров", caret, "w10 line")}${btn("Нумерация", numberIcon, "w20 line")}${btn("Вид нумерации", caret, "w10 line")}${btn("Многоуровневый", html`${multiIcon}${caret}`, "w26 line")}</div>
          <div class="grp">${btn("Уменьшить отступ", indentIcon(-1), "w20")}${btn("Увеличить отступ", indentIcon(1), "w20 line")}</div>
          <div class="grp">${btn("Колонки", html`${columnsIcon}${caret}`, "w26 caretgap")}</div></div>
        <div class="rr"><div class="grp">${["left", "center", "right", "justify"].map((k, i) => btn(["По левому краю", "По центру", "По правому краю", "По ширине"][i], alignIcon(k, i ? "#777" : "#444"), i ? "w20 line" : "dark"))}</div>
          <div class="grp">${btn("Интервал", html`${spacingIcon}${caret}`, "w26")}</div>
          <div class="grp">${btn("Границы", html`${borderIcon("#bbb")}${caret}`, "w26 caretgap")}</div>
          <div class="grp">${btn("Сортировка", html`<span class="sortaz"><b>A</b><b>Z</b></span>${handIcon}`, "w18")}</div></div>
      </div>${sep}
      <div class="rg g3"><div class="rt">Стили</div>
        <div class="stylebody"><div class="gallery">${card("s", "АаБбВвГгДд", "Обычный", true)}${card("s", "АаБбВвГгДд", "Без интервала")}${card("h", "АаБбВвГг", "Заголовок 1")}<button aria-label="Ещё стили">${playIcon}</button></div>
          <div class="stylecol">${btn("Изменить стили", html`<span class="aa">A<b>A</b></span>${caret}`)}${btn("Область стилей", gaugeIcon, "w18 on")}</div></div>
      </div>${sep}
      <div class="rg g4"><div class="rt">Вставить</div><div class="row">${big(textboxIcon, "Надпись")}${big(shapeIcon, "Фигура")}${big(pictureIcon, "Рисунок")}</div></div>${sep}
      <div class="rg g5"><div class="rt">Темы</div><div class="row">${big(html`<span class="theme">Aa<i></i></span>`, "Темы")}</div></div>${sep}
    </div></div>`;
  }

  panel() {
    return html`<section class="panel" aria-label="Стили">
      <div class="ptitle"><span class="dots"><i></i><i></i><i></i></span><span>Стили</span><span class="right">${lockGlyph}</span></div>
      <div class="ptabs">${pTab.map((t, i) => html`<button class=${classMap({ cur: i === 0 })} aria-label=${["Стили", "Цитаты", "Альбом", "Справочник", "Совместимость"][i]}>${t}</button>`)}</div>
      <div class="pbody">
        <p>Текущий стиль выделенного текста:</p>
        <div class="cur-style cambria">Обычный${pilcrow}</div>
        <div class="acts"><button>${plusIcon}Создать стиль...</button><button>${selectAllIcon}Выделить все</button></div>
        <p>Выберите стиль для применения:</p>
        <div class="list"><ul>
          <li><span class="cambria">Очистить формат</span></li>
          <li class="sel"><span class="cambria">Обычный</span>${pilcrow}</li>
          <li><span class="h1">Заголовок 1</span>${pilcrow}</li>
          <li><span class="h2">Заголовок 2</span>${pilcrow}</li>
          <li><span class="ti">Название</span>${pilcrow}</li></ul><span class="bar"></span></div>
        <label class="filter">Список:<span class="pop"><select><option>Рекомендуется</option></select>${pic(5, 9, svg`<path d="M0 3.500h5L2.500.3zM0 5.500h5L2.500 8.700z" fill="#444"/>`)}</span></label>
        <div class="checks"><label class="chk"><input type="checkbox" />Выделять автоформатирование</label><label class="chk"><input type="checkbox" />Выделять прямое форматирование</label></div>
        <div class="grip"><i></i><i></i><i></i></div>
      </div>
    </section>`;
  }
}
